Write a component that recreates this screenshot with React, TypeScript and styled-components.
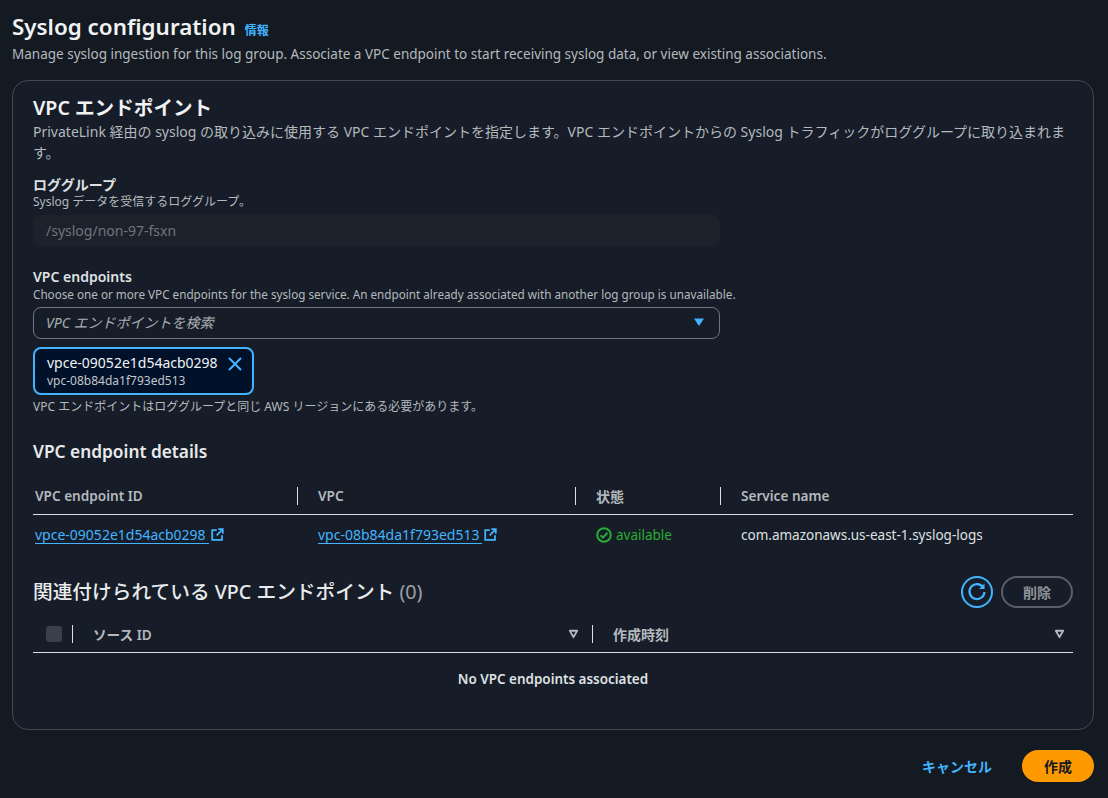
import React from "react";
import styled, { createGlobalStyle } from "styled-components";

const Global = createGlobalStyle`
  html, body { margin: 0; padding: 0; background: #141a21; }
  body { font-family: "Noto Sans", "Noto Sans CJK JP", sans-serif; }
  * { box-sizing: border-box; }
`;

const Page = styled.div`
  width: 1108px;
  height: 798px;
  overflow: hidden;
  padding: 13px 14px 0 12px;
  background: #141a21;
  color: #e8eaec;
`;
const TitleRow = styled.div`
  display: flex;
  align-items: baseline;
  gap: 9px;
  height: 28px;
`;
const Title = styled.h1`
  margin: 0;
  font-size: 22.4px;
  line-height: 28px;
  font-weight: 600;
  color: #f1f2f3;
`;
const InfoLink = styled.a`
  font-size: 12px;
  font-weight: 600;
  color: #42b4ff;
`;
const PageDesc = styled.p`
  margin: 3px 0 0;
  font-size: 13.5px;
  line-height: 20px;
  color: #b4b9be;
`;
const Card = styled.section`
  margin-top: 16px;
  height: 650px;
  border: 1px solid #434850;
  border-radius: 16px;
  background: #161d28;
  padding: 14px 20px 0;
`;
const CardTitle = styled.h2`
  margin: 0;
  font-size: 19.6px;
  line-height: 26px;
  font-weight: 600;
  color: #f1f2f3;
`;
const CardDesc = styled.p`
  margin: 0;
  font-size: 14px;
  line-height: 21px;
  color: #b4b9be;
`;
const Field = styled.div<{ $top: number }>`
  margin-top: ${(p) => p.$top}px;
  width: 687px;
`;
const Label = styled.div`
  font-size: 14px;
  line-height: 18px;
  font-weight: 600;
  color: #dfe1e3;
`;
const Hint = styled.div<{ $size?: number }>`
  font-size: ${(p) => p.$size ?? 12}px;
  line-height: 16px;
  color: #b4b9be;
  white-space: nowrap;
`;
const ReadonlyInput = styled.div`
  margin-top: 5px;
  height: 32px;
  padding: 0 13px;
  border-radius: 8px;
  background: #1b222c;
  font-size: 14px;
  line-height: 32px;
  color: #6f757d;
`;
const Select = styled.div`
  margin-top: 5px;
  height: 32px;
  padding: 0 14px 2px 12px;
  display: flex;
  align-items: center;
  justify-content: space-between;
  border: 1px solid #6f757d;
  border-radius: 8px;
  font-size: 14px;
  font-style: italic;
  color: #a9aeb4;
`;
const Caret = styled.svg`
  width: 12px;
  height: 12px;
  flex: none;
  display: block;
`;
const Token = styled.div`
  margin-top: 8px;
  width: 221px;
  height: 48px;
  position: relative;
  padding: 4px 12px;
  border: 2px solid #42b4ff;
  border-radius: 8px;
  background: #001129;
`;
const TokenMain = styled.div`
  font-size: 14px;
  line-height: 20px;
  color: #f1f2f3;
`;
const TokenSub = styled.div`
  font-size: 12px;
  line-height: 15px;
  color: #c3c7cb;
`;
const TokenClose = styled.svg`
  position: absolute;
  right: 10px;
  top: 8px;
  width: 14px;
  height: 14px;
`;
const TokenHint = styled(Hint)`
  margin-top: 4px;
`;
const SectionTitle = styled.h3`
  margin: 25px 0 0;
  font-size: 17.3px;
  line-height: 24px;
  font-weight: 600;
  color: #e8eaec;
`;
const Table = styled.div<{ $cols: string; $top: number }>`
  margin-top: ${(p) => p.$top}px;
  display: grid;
  grid-template-columns: ${(p) => p.$cols};
`;
const Th = styled.div<{ $inset?: boolean }>`
  height: 33px;
  padding: 0 2px 5px ${(p) => (p.$inset ? 20 : 2)}px;
  border-bottom: 1px solid #dcdfe2;
  display: flex;
  align-items: center;
  justify-content: space-between;
  font-size: 13.6px;
  font-weight: 600;
  color: #b4b9be;
  position: relative;
`;
const ThText = styled.span<{ $cjk?: boolean }>`
  white-space: nowrap;
  font-size: ${(p) => (p.$cjk ? 14 : 13.6)}px;
`;
const Divider = styled.span`
  position: absolute;
  right: 0;
  top: 5px;
  width: 1px;
  height: 18px;
  background: #dcdfe2;
`;
const Td = styled.div<{ $inset?: boolean }>`
  height: 40px;
  padding: 0 2px 0 ${(p) => (p.$inset ? 20 : 2)}px;
  display: flex;
  align-items: center;
  font-size: 13.5px;
  color: #dfe1e3;
  white-space: nowrap;
`;
const Link = styled.a`
  display: inline-flex;
  align-items: center;
  color: #42b4ff;
  font-size: 14px;
`;
const LinkText = styled.span`
  border-bottom: 1px solid #42b4ff;
  line-height: 16px;
  padding-right: 3px;
`;
const ExtIcon = styled.svg`
  width: 13px;
  height: 13px;
  margin: 0 0 1px 2px;
  flex: none;
`;
const Status = styled.span`
  display: inline-flex;
  align-items: center;
  gap: 4px;
  color: #29ad32;
`;
const AssocHeader = styled.div`
  margin-top: 21px;
  display: flex;
  align-items: center;
  justify-content: space-between;
  height: 32px;
`;
const AssocTitle = styled.h3`
  margin: 0;
  font-size: 19.7px;
  line-height: 32px;
  font-weight: 500;
  color: #e8eaec;
`;
const Count = styled.span`
  font-weight: 400;
  color: #9ba0a6;
`;
const Actions = styled.div`
  display: flex;
  align-items: center;
  gap: 8px;
`;
const IconButton = styled.button`
  width: 32px;
  height: 32px;
  padding: 0;
  display: flex;
  align-items: center;
  justify-content: center;
  border: 2px solid #42b4ff;
  border-radius: 50%;
  background: transparent;
`;
const DisabledButton = styled.button`
  width: 72px;
  height: 32px;
  padding: 0;
  border: 2px solid #5a5f67;
  border-radius: 16px;
  background: transparent;
  color: #8f949a;
  font: 600 14px "Noto Sans", "Noto Sans CJK JP", sans-serif;
`;
const Checkbox = styled.span`
  width: 16px;
  height: 16px;
  margin-left: 11px;
  border-radius: 3px;
  background: #3a3f49;
`;
const SortIcon = styled.svg<{ $gap: number }>`
  width: 11px;
  height: 11px;
  margin-right: ${(p) => p.$gap}px;
  flex: none;
`;
const Empty = styled.div`
  height: 52px;
  display: flex;
  align-items: center;
  justify-content: center;
  font-size: 13.45px;
  font-weight: 600;
  color: #dfe1e3;
`;
const Footer = styled.div`
  margin-top: 20px;
  display: flex;
  align-items: center;
  justify-content: flex-end;
  gap: 30px;
`;
const Cancel = styled.a`
  font-size: 14px;
  font-weight: 600;
  color: #42b4ff;
`;
const Primary = styled.button`
  width: 72px;
  height: 32px;
  padding: 0;
  border: 0;
  border-radius: 16px;
  background: #ff9900;
  color: #141a21;
  font: 600 14px "Noto Sans", "Noto Sans CJK JP", sans-serif;
`;

const External = () => (
  <ExtIcon viewBox="0 0 16 16" fill="none" stroke="#42b4ff" strokeWidth="2.2">
    <path d="M7 2.5H1.5v12h12V9" />
    <path d="M9 1.5h5.5V7M14.5 1.5 7 9" />
  </ExtIcon>
);
const Sort = ({ gap }: { gap: number }) => (
  <SortIcon $gap={gap} viewBox="0 0 12 12" fill="none" stroke="#b4b9be" strokeWidth="2" strokeLinejoin="round">
    <path d="M2 3h8L6 10z" />
  </SortIcon>
);

export default function App() {
  return (
    <Page>
      <Global />
      <TitleRow>
        <Title>Syslog configuration</Title>
        <InfoLink>情報</InfoLink>
      </TitleRow>
      <PageDesc>Manage syslog ingestion for this log group. Associate a VPC endpoint to start receiving syslog data, or view existing associations.</PageDesc>
      <Card>
        <CardTitle>VPC エンドポイント</CardTitle>
        <CardDesc>PrivateLink 経由の syslog の取り込みに使用する VPC エンドポイントを指定します。VPC エンドポイントからの Syslog トラフィックがロググループに取り込まれます。</CardDesc>
        <Field $top={13}>
          <Label>ロググループ</Label>
          <Hint>Syslog データを受信するロググループ。</Hint>
          <ReadonlyInput>/syslog/non-97-fsxn</ReadonlyInput>
        </Field>
        <Field $top={21}>
          <Label>VPC endpoints</Label>
          <Hint $size={11.7}>Choose one or more VPC endpoints for the syslog service. An endpoint already associated with another log group is unavailable.</Hint>
          <Select>
            VPC エンドポイントを検索
            <Caret viewBox="0 0 12 12"><path d="M1 2.5h10L6 10z" fill="#42b4ff" /></Caret>
          </Select>
          <Token>
            <TokenMain>vpce-09052e1d54acb0298</TokenMain>
            <TokenSub>vpc-08b84da1f793ed513</TokenSub>
            <TokenClose viewBox="0 0 14 14" fill="none" stroke="#42b4ff" strokeWidth="2"><path d="M1 1l12 12M13 1 1 13" /></TokenClose>
          </Token>
          <TokenHint>VPC エンドポイントはロググループと同じ AWS リージョンにある必要があります。</TokenHint>
        </Field>
        <SectionTitle>VPC endpoint details</SectionTitle>
        <Table $cols="265px 278px 145px 352px" $top={18}>
          <Th><ThText>VPC endpoint ID</ThText><Divider /></Th>
          <Th $inset><ThText>VPC</ThText><Divider /></Th>
          <Th $inset><ThText $cjk>状態</ThText><Divider /></Th>
          <Th $inset><ThText>Service name</ThText></Th>
          <Td><Link><LinkText>vpce-09052e1d54acb0298</LinkText><External /></Link></Td>
          <Td $inset><Link><LinkText>vpc-08b84da1f793ed513</LinkText><External /></Link></Td>
          <Td $inset>
            <Status>
              <svg width="16" height="16" viewBox="0 0 16 16" fill="none" stroke="#29ad32" strokeWidth="2"><circle cx="8" cy="8" r="6.8" /><path d="M4.6 8.2 7 10.6l4.4-4.8" /></svg>
              available
            </Status>
          </Td>
          <Td $inset>com.amazonaws.us-east-1.syslog-logs</Td>
        </Table>
        <AssocHeader>
          <AssocTitle>関連付けられている VPC エンドポイント <Count>(0)</Count></AssocTitle>
          <Actions>
            <IconButton aria-label="refresh">
              <svg width="20" height="20" viewBox="0 0 16 16" fill="none" stroke="#42b4ff" strokeWidth="1.8"><path d="M13.2 4.6A6 6 0 1 0 14 8" /><path d="M14 1.2v4.3H9.7z" fill="#42b4ff" stroke="none" /></svg>
            </IconButton>
            <DisabledButton>削除</DisabledButton>
          </Actions>
        </AssocHeader>
        <Table $cols="40px 520px 480px" $top={12}>
          <Th><Checkbox /><Divider /></Th>
          <Th $inset><ThText>ソース ID</ThText><Sort gap={12} /><Divider /></Th>
          <Th $inset><ThText $cjk>作成時刻</ThText><Sort gap={6} /></Th>
        </Table>
        <Empty>No VPC endpoints associated</Empty>
      </Card>
      <Footer>
        <Cancel>キャンセル</Cancel>
        <Primary>作成</Primary>
      </Footer>
    </Page>
  );
}
